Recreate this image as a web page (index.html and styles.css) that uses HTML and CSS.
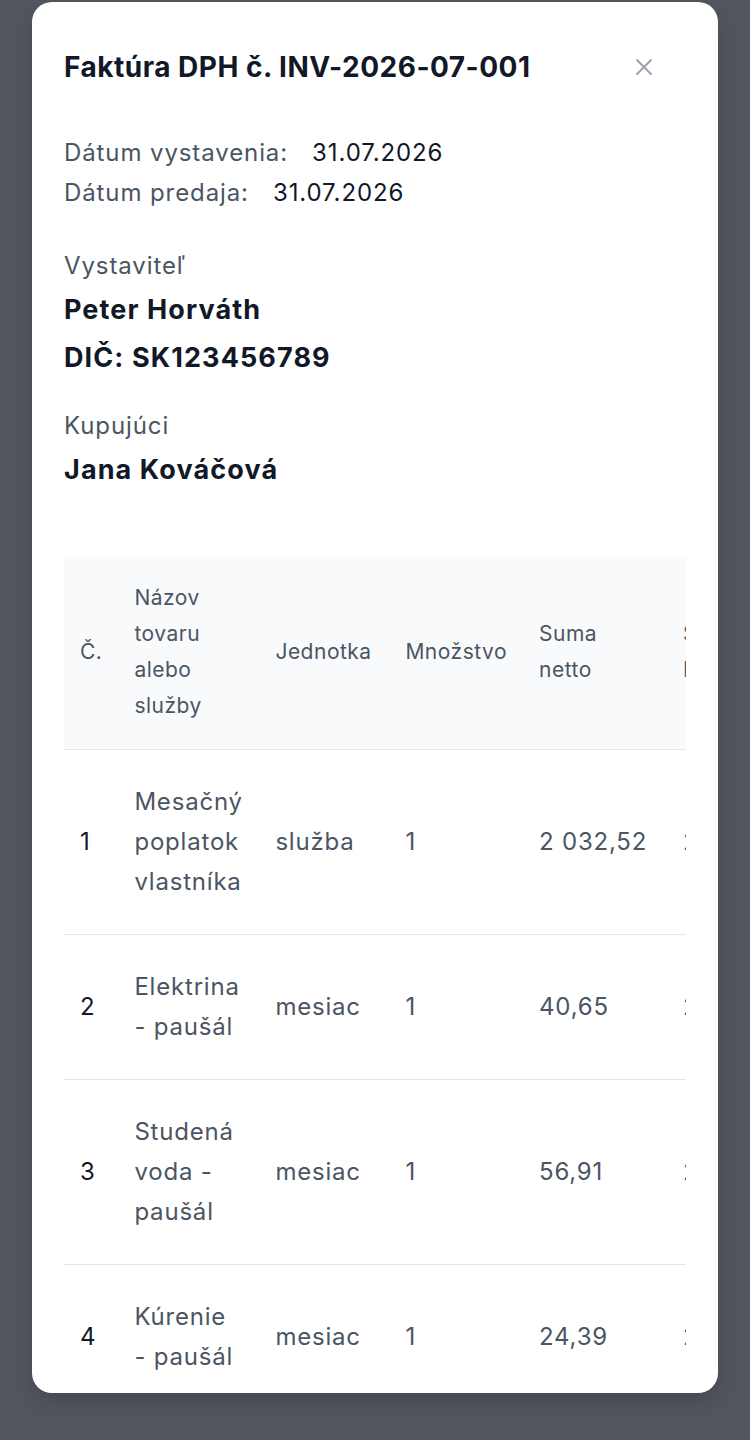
FILE: index.html
```html
<!DOCTYPE html>
<html lang="sk">
<head>
<meta charset="utf-8">
<title>Faktúra DPH</title>
<link rel="stylesheet" href="styles.css">
</head>
<body>
<div class="overlay">
  <div class="modal">
    <div class="modal-head">
      <h2 class="title">Faktúra DPH č. INV-2026-07-001</h2>
      <button class="close" aria-label="Zavrieť">
        <svg width="18" height="18" viewBox="0 0 18 18"><path d="M2 2 L16 16 M16 2 L2 16" stroke="#9ca3af" stroke-width="2" stroke-linecap="round" fill="none"/></svg>
      </button>
    </div>
    <div class="dates">
      <div class="date-row"><span class="date-label">Dátum vystavenia:</span><span class="date-value">31.07.2026</span></div>
      <div class="date-row"><span class="date-label">Dátum predaja:</span><span class="date-value">31.07.2026</span></div>
    </div>
    <div class="party">
      <div class="party-label">Vystaviteľ</div>
      <div class="party-name">Peter Horváth</div>
      <div class="party-name">DIČ: SK123456789</div>
    </div>
    <div class="party">
      <div class="party-label">Kupujúci</div>
      <div class="party-name">Jana Kováčová</div>
    </div>
    <div class="table-wrap">
      <table class="items">
        <thead>
          <tr>
            <th class="c-no">Č.</th>
            <th class="c-name">Názov tovaru alebo služby</th>
            <th class="c-unit">Jednotka</th>
            <th class="c-qty">Množstvo</th>
            <th class="c-sum">Suma netto</th>
            <th class="c-sum">Sadzba DPH</th>
            <th class="c-sum">Suma DPH</th>
            <th class="c-sum">Suma brutto</th>
          </tr>
        </thead>
        <tbody>
          <tr>
            <td class="c-no">1</td>
            <td class="c-name">Mesačný poplatok vlastníka</td>
            <td>služba</td>
            <td>1</td>
            <td>2&nbsp;032,52</td>
            <td>23&nbsp;%</td>
            <td>467,48</td>
            <td>2&nbsp;500,00</td>
          </tr>
          <tr>
            <td class="c-no">2</td>
            <td class="c-name">Elektrina - paušál</td>
            <td>mesiac</td>
            <td>1</td>
            <td>40,65</td>
            <td>23&nbsp;%</td>
            <td>9,35</td>
            <td>50,00</td>
          </tr>
          <tr>
            <td class="c-no">3</td>
            <td class="c-name">Studená voda - paušál</td>
            <td>mesiac</td>
            <td>1</td>
            <td>56,91</td>
            <td>23&nbsp;%</td>
            <td>13,09</td>
            <td>70,00</td>
          </tr>
          <tr>
            <td class="c-no">4</td>
            <td class="c-name">Kúrenie - paušál</td>
            <td>mesiac</td>
            <td>1</td>
            <td>24,39</td>
            <td>23&nbsp;%</td>
            <td>5,61</td>
            <td>30,00</td>
          </tr>
        </tbody>
      </table>
    </div>
  </div>
</div>
</body>
</html>
```

FILE: styles.css
```css
html, body {
  margin: 0;
  padding: 0;
  background: #52565f;
  font-family: Inter, "Noto Sans", sans-serif;
}

.overlay {
  padding: 2px 32px 0;
  height: 1438px;
}

.modal {
  background: #ffffff;
  border-radius: 20px;
  height: 1391px;
  overflow: hidden;
  padding: 48px 32px 0;
  box-sizing: border-box;
  box-shadow: 0 10px 25px rgba(0, 0, 0, 0.15);
}

.modal-head {
  display: flex;
  align-items: center;
  justify-content: space-between;
}

.title {
  margin: 0;
  font-size: 28px;
  line-height: 34px;
  font-weight: 700;
  letter-spacing: 0.5px;
  color: #111827;
  white-space: nowrap;
}

.close {
  border: 0;
  background: none;
  padding: 0;
  width: 18px;
  height: 18px;
  margin-right: 33px;
  display: flex;
}

.dates {
  margin-top: 49px;
  margin-bottom: 33px;
}

.date-row {
  font-size: 24px;
  line-height: 40px;
  letter-spacing: 0.9px;
  color: #4b5563;
}

.date-value {
  color: #111827;
  margin-left: 24px;
}

.party {
  margin-bottom: 24px;
}

.party-label {
  font-size: 24px;
  line-height: 40px;
  letter-spacing: 0.9px;
  color: #4b5563;
}

.party-name {
  font-size: 27px;
  line-height: 48px;
  font-weight: 700;
  letter-spacing: 1.1px;
  color: #111827;
}

.table-wrap {
  margin-top: 63px;
  overflow: hidden;
}

.items {
  border-collapse: collapse;
  width: max-content;
}

.items th {
  background: #f9fafb;
  color: #4b5563;
  font-weight: 400;
  font-size: 21px;
  line-height: 36px;
  letter-spacing: 0.5px;
  text-align: left;
  padding: 23px 16px 25px;
  border-bottom: 1px solid #e5e7eb;
  vertical-align: middle;
}

.items td {
  color: #4b5563;
  font-size: 24px;
  line-height: 40px;
  letter-spacing: 0.8px;
  padding: 32px 16px;
  border-bottom: 1px solid #e5e7eb;
  vertical-align: middle;
  white-space: nowrap;
}

.items td.c-no {
  color: #111827;
}

.items .c-no {
  width: 21px;
}

.items .c-name {
  width: 109px;
}

.items td.c-name {
  white-space: normal;
}

.items .c-unit {
  width: 98px;
}

.items .c-qty {
  width: 101px;
}

.items .c-sum {
  width: 112px;
}
```
